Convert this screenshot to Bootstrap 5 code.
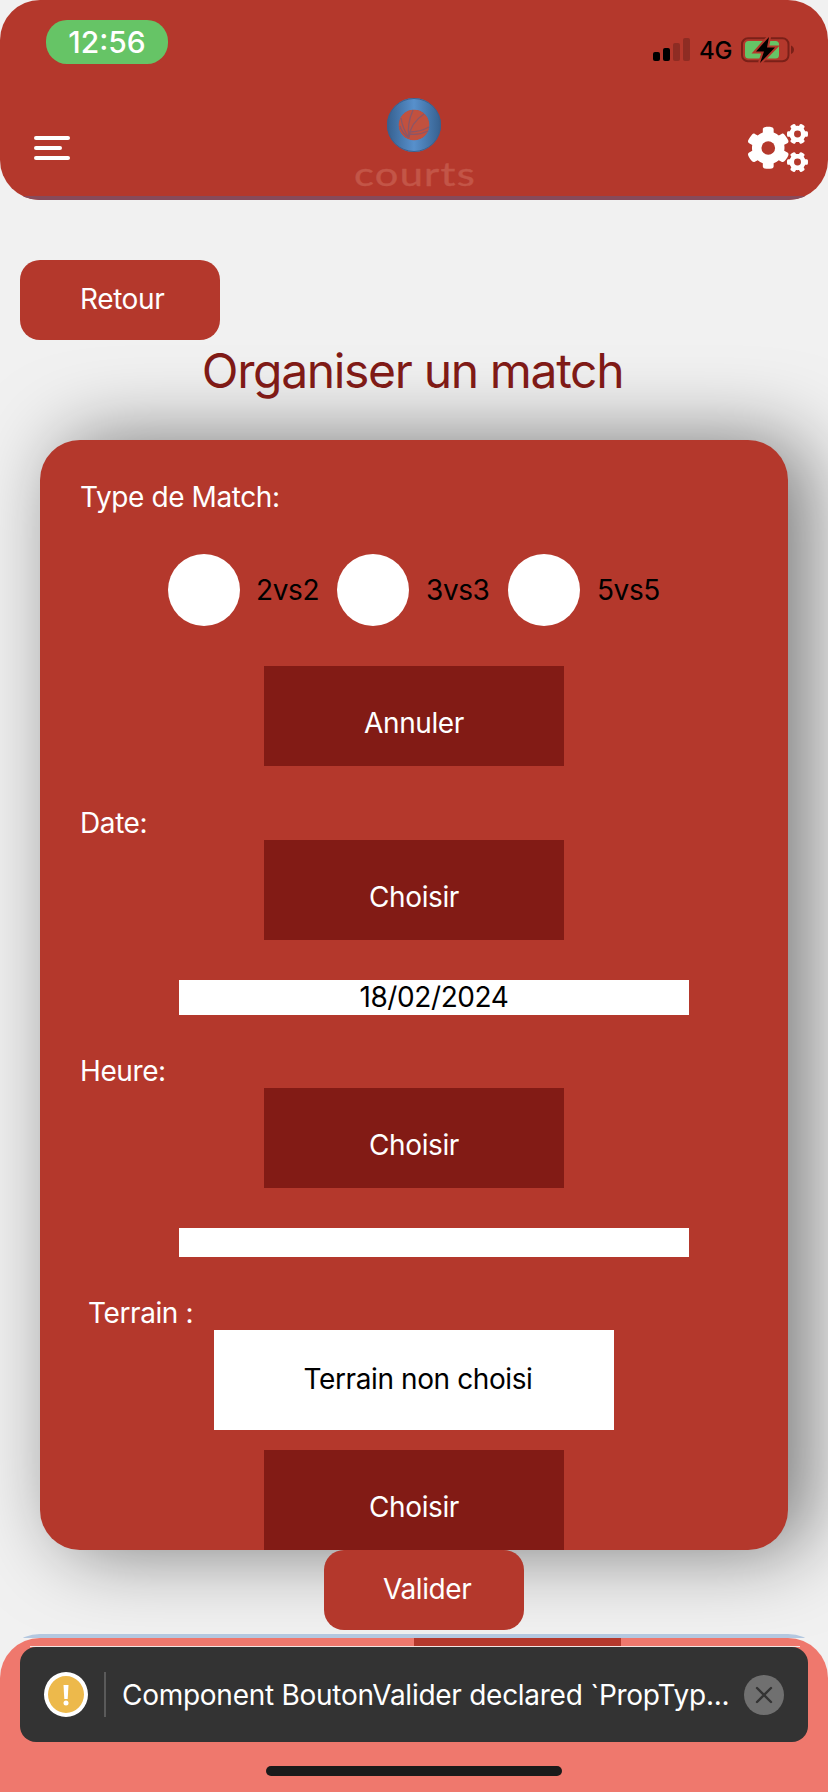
<!DOCTYPE html>
<html lang="fr">
<head>
<meta charset="utf-8">
<meta name="viewport" content="width=device-width, initial-scale=1">
<title>Organiser un match</title>
<link href="https://cdn.jsdelivr.net/npm/bootstrap@5.3.0/dist/css/bootstrap.min.css" rel="stylesheet">
<style>
:root{--brick:#b4382c;--maroon:#821b15}
body{font-family:Inter,"Liberation Sans",sans-serif;font-size:28px;line-height:34px;letter-spacing:-.4px;background:#f1f1f1;color:#000;height:1792px;overflow:hidden}
svg{display:block;flex:none}
.top-bar{height:200px;background:var(--brick);border-radius:40px;position:relative;overflow:hidden}
.top-bar::after{content:"";position:absolute;left:0;right:0;bottom:0;height:4px;background:#874a5a}
.status-row{height:84px;padding:20px 33px 0 46px}
.clock{width:122px;height:44px;border-radius:21px;background:#66c466;font-size:30px;line-height:44px;font-weight:500;letter-spacing:0}
.indicators{padding-top:17px}
.net{font-size:24px;line-height:30px;font-weight:500;margin:-1px 9px 0 8px}
.nav-row{height:116px;padding:12px 20px 0 34px}
.menu-icon{margin-top:40px}
.brand-logo{margin-left:10px}
.gears-icon{margin-top:28px}
.pill-btn{width:200px;height:80px;border:0;border-radius:20px;background:var(--brick);padding:0 0 2px 60px;color:#fff;letter-spacing:inherit}
.back-btn{margin:60px 0 0 20px}
.submit-btn{margin-left:324px;padding-left:59px}
.page-title{font-size:48px;line-height:58px;letter-spacing:-1.34px;color:#7f1a16;margin:2px 0 40px;padding-right:3px;font-weight:400}
.match-card{width:748px;height:1110px;border-radius:40px;background:var(--brick);box-shadow:20px 0 80px rgba(0,0,0,.5);padding-top:40px}
.field-label{padding-left:40px;height:34px;color:#fff}
.field-label.is-first-below{margin-top:40px}
.choices{margin:40px 0 40px 128px}
.choice-dot{width:72px;height:72px}
.choice-text{width:99px;padding-left:17px}
.choice-text.is-narrow{width:97px;padding-left:16px}
.dark-btn{width:300px;height:100px;background:var(--maroon);padding-top:40px;color:#fff}
.value-box{width:510px;margin:40px 0 39px 139px;height:35px}
.value-box.is-empty{height:29px}
.ground-box{width:400px;height:100px;padding:32px 0 0 8px;margin-bottom:20px}
.tab-wrap{margin-top:4px;height:158px;padding-top:4px;background:linear-gradient(#b4c8e0 4px,transparent 4px);border-radius:40px 40px 0 0}
.tab-face{height:154px;border-radius:40px 40px 0 0;background:#ef786d;overflow:hidden}
.tab-active{height:8px;background:var(--brick)}
.toast-bar{position:absolute;left:20px;top:1647px;width:788px;height:95px;border-radius:16px;background:#333;color:#fff;padding:0 24px;letter-spacing:-.27px}
.toast-bar::before{content:"";position:absolute;left:10px;right:8px;top:-1px;height:1px;background:#f4e4e2}
.warn{width:44px;height:45px;border:4px solid #fff;background:#edb94b}
.sep{width:2px;height:45px;background:#5a5a5a;margin:0 16px}
.home-line{position:absolute;left:266px;top:1766px;width:296px;height:10px;border-radius:5px;background:#1a1a1a}
</style>
</head>
<body>
<header class="top-bar text-white">
  <div class="status-row d-flex justify-content-between">
    <div class="clock text-center">12:56</div>
    <div class="indicators d-flex text-black">
      <svg width="38" height="25" viewBox="0 0 38 25"><rect x="0" y="15" width="7" height="9" rx="2"/><rect x="10" y="11" width="7" height="13" rx="2"/><g fill="#8e2c23"><rect x="20" y="6" width="7" height="18" rx="2"/><rect x="30" y="1" width="7" height="23" rx="2"/></g></svg>
      <span class="net">4G</span>
      <svg width="54" height="26" viewBox="0 0 54 26"><rect x="1" y="1.200" width="46.500" height="23" rx="6" fill="none" stroke="#7a2018" stroke-width="2"/><path d="M50 8.500c4 1.500 4 7 0 8.500z" fill="#7a2018"/><rect x="4" y="4" width="34" height="17.500" rx="3.500" fill="#66c466"/><path d="M28 0 15 14.500h8l-4 11.500 15-15.500h-8z" stroke="#b4382c" stroke-width="4"/><path d="M28 0 15 14.500h8l-4 11.500 15-15.500h-8z"/></svg>
    </div>
  </div>
  <div class="nav-row d-flex align-items-start justify-content-between">
    <svg class="menu-icon" width="36" height="24" viewBox="0 0 36 24" fill="#fff"><rect width="36" height="4" rx="2"/><rect y="10" width="28" height="4" rx="2"/><rect y="20" width="36" height="4" rx="2"/></svg>
    <svg class="brand-logo" width="140" height="96" viewBox="0 0 140 96">
      <defs><linearGradient id="ring" gradientUnits="userSpaceOnUse" x1="43" x2="97" y1="0" y2="0"><stop offset="0" stop-color="#36608f"/><stop offset=".5" stop-color="#5790cc"/><stop offset="1" stop-color="#36608f"/></linearGradient></defs>
      <circle cx="70" cy="29" r="21" fill="none" stroke="url(#ring)" stroke-width="12"/><circle cx="70" cy="29" r="26.500" fill="none" stroke="#3d5f8c" stroke-width="1"/>
      <circle cx="70" cy="29" r="15.300" fill="#c1513f"/>
      <g fill="none" stroke="#8b5667" stroke-width="1.300"><path d="M69 14C65 23 63 31 65 42M80 18C71 24 66 32 65 41M57 22c1 8 4 14 8 20M85 31c-7 4-12 5-20 5M84 35c-6 3-12 4-19 3M56 30c1 5 5 9 9 12"/></g>
      <text x="10" y="89.500" font-family="Lato" font-size="33" letter-spacing="1" fill="#c35547" stroke="#c35547" stroke-width=".4" textLength="122" lengthAdjust="spacingAndGlyphs">courts</text>
    </svg>
    <svg class="gears-icon" width="60" height="48" viewBox="0 0 640 512" fill="#fff">
      <defs><path id="gear" d="M512.100 191l-8.200 14.300c-3 5.300-9.400 7.500-15.100 5.400-11.800-4.400-22.600-10.700-32.100-18.600-4.600-3.800-5.800-10.500-2.800-15.700l8.200-14.300c-6.900-8-12.300-17.300-15.900-27.400h-16.500c-6 0-11.200-4.300-12.200-10.300-2-12-2.100-24.600 0-37.100 1-6 6.200-10.400 12.200-10.400h16.500c3.600-10.100 9-19.400 15.900-27.400l-8.200-14.300c-3-5.200-1.900-11.900 2.800-15.700 9.500-7.900 20.400-14.200 32.100-18.600 5.700-2.100 12.100.1 15.100 5.400l8.200 14.300c10.500-1.900 21.200-1.900 31.700 0L552 6.300c3-5.300 9.400-7.500 15.100-5.400 11.800 4.400 22.600 10.700 32.100 18.600 4.600 3.800 5.800 10.500 2.800 15.700l-8.200 14.300c6.900 8 12.300 17.300 15.900 27.400h16.500c6 0 11.200 4.300 12.200 10.300 2 12 2.100 24.600 0 37.100-1 6-6.200 10.400-12.200 10.400h-16.500c-3.600 10.100-9 19.400-15.900 27.400l8.200 14.300c3 5.200 1.900 11.900-2.800 15.700-9.500 7.900-20.400 14.200-32.100 18.600-5.700 2.100-12.100-.1-15.100-5.400l-8.200-14.300c-10.400 1.900-21.200 1.900-31.700 0z"/></defs>
      <use href="#gear"/><use href="#gear" y="300"/>
      <path d="M386.300 286.100l33.700 16.800c10.100 5.800 14.500 18.100 10.500 29.100-8.900 24.200-26.400 46.400-42.600 65.800-7.400 8.900-20.200 11.100-30.300 5.300l-29.100-16.800c-16 13.700-34.600 24.600-54.900 31.700v33.600c0 11.600-8.300 21.600-19.700 23.600-24.600 4.200-50.400 4.400-75.900 0-11.500-2-20-11.900-20-23.600V418c-20.300-7.200-38.900-18-54.900-31.700L74 403c-10 5.800-22.900 3.600-30.300-5.300-16.200-19.400-33.300-41.600-42.200-65.700-4-10.900.4-23.200 10.500-29.100l33.300-16.800c-3.900-20.900-3.900-42.400 0-63.400L12 205.800c-10.100-5.800-14.600-18.100-10.500-29 8.900-24.200 26-46.400 42.200-65.800 7.400-8.900 20.200-11.100 30.300-5.300l29.100 16.800c16-13.700 34.600-24.600 54.900-31.700V57.100c0-11.500 8.200-21.500 19.600-23.500 24.600-4.200 50.500-4.400 76-.1 11.500 2 20 11.900 20 23.600v33.600c20.300 7.200 38.900 18 54.900 31.700l29.100-16.800c10-5.800 22.900-3.600 30.300 5.300 16.200 19.400 33.200 41.600 42.100 65.800 4 10.900.1 23.200-10 29.100l-33.700 16.800c3.900 21 3.900 42.500 0 63.500z"/>
      <g fill="#b4382c"><circle cx="216" cy="256" r="73"/><circle cx="528" cy="106" r="37"/><circle cx="528" cy="406" r="37"/></g>
    </svg>
  </div>
</header>
<main>
  <button class="pill-btn back-btn d-block text-start">Retour</button>
  <h1 class="page-title text-center">Organiser un match</h1>
  <section class="match-card mx-auto">
    <div class="field-label">Type de Match:</div>
    <div class="choices d-flex align-items-center">
      <span class="choice-dot bg-white rounded-circle"></span><span class="choice-text is-narrow">2vs2</span>
      <span class="choice-dot bg-white rounded-circle"></span><span class="choice-text">3vs3</span>
      <span class="choice-dot bg-white rounded-circle"></span><span class="choice-text">5vs5</span>
    </div>
    <div class="dark-btn mx-auto text-center">Annuler</div>
    <div class="field-label is-first-below">Date:</div>
    <div class="dark-btn mx-auto text-center">Choisir</div>
    <div class="value-box bg-white text-center">18/02/2024</div>
    <div class="field-label">Heure:</div>
    <div class="dark-btn mx-auto text-center">Choisir</div>
    <div class="value-box is-empty bg-white"></div>
    <div class="field-label ps-5">Terrain :</div>
    <div class="ground-box bg-white mx-auto text-center">Terrain non choisi</div>
    <div class="dark-btn mx-auto text-center">Choisir</div>
  </section>
  <button class="pill-btn submit-btn d-block text-start position-relative">Valider</button>
</main>
<footer class="tab-wrap"><div class="tab-face d-flex"><div class="w-50"></div><div class="tab-active w-25"></div></div></footer>
<div class="toast-bar d-flex align-items-center">
  <div class="warn rounded-circle d-flex align-items-center justify-content-center"><svg width="6" height="22" viewBox="0 0 6 22" fill="#fff"><path d="M.5 1h5l-.8 14H1.300z"/><circle cx="3" cy="19" r="2.500"/></svg></div>
  <div class="sep"></div>
  <span class="text-nowrap">Component BoutonValider declared `PropTyp...</span>
  <svg class="ms-auto" width="40" height="40" viewBox="0 0 40 40"><circle cx="20" cy="20" r="20" fill="#707070"/><path d="M13 13 27 27M27 13 13 27" stroke="#333" stroke-width="2.400" stroke-linecap="round"/></svg>
</div>
<div class="home-line"></div>
<script src="https://cdn.jsdelivr.net/npm/bootstrap@5.3.0/dist/js/bootstrap.bundle.min.js"></script>
</body>
</html>
